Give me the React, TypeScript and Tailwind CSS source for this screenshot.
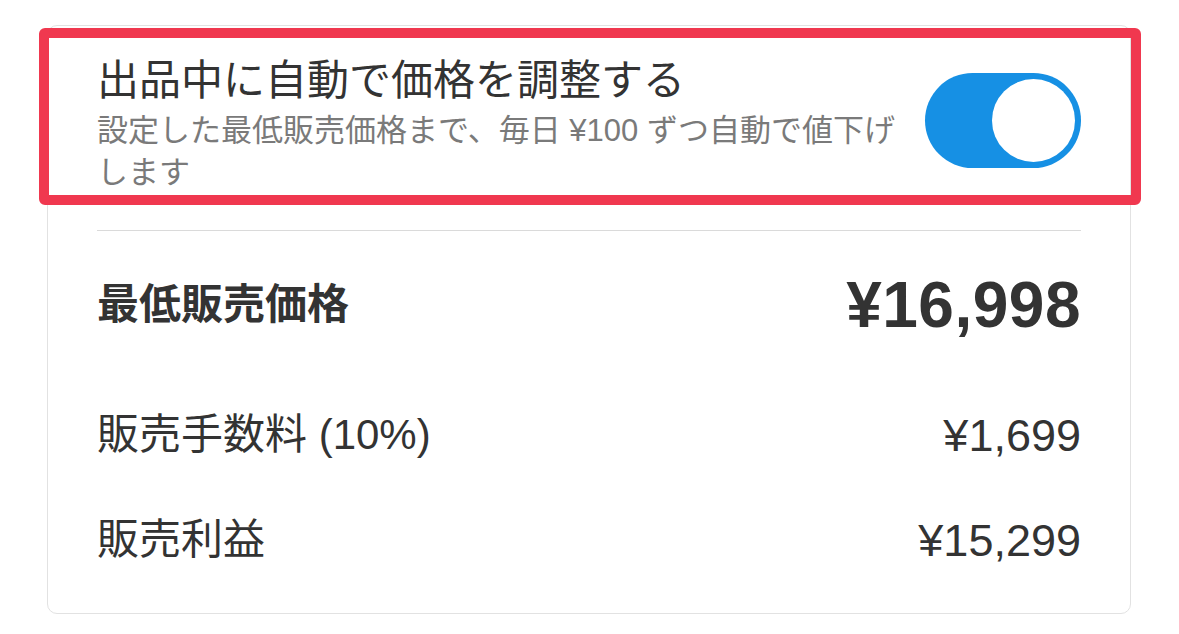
import { useState } from 'react';

const font = 'font-["Liberation_Sans","Noto_Sans_CJK_JP",sans-serif]';

interface ToggleProps {
  checked: boolean;
  onChange: (next: boolean) => void;
}

function Toggle({ checked, onChange }: ToggleProps) {
  return (
    <button
      type="button"
      role="switch"
      aria-checked={checked}
      onClick={() => onChange(!checked)}
      className={`mt-[18px] flex h-[95px] w-[156px] shrink-0 items-center rounded-full p-[6px] ${
        checked ? 'justify-end bg-[#1690e4]' : 'justify-start bg-[#e5e5ea]'
      }`}
    >
      <span className="h-[83px] w-[83px] rounded-full bg-white" />
    </button>
  );
}

interface RowProps {
  label: string;
  value: string;
  strong?: boolean;
  height: string;
}

function PriceRow({ label, value, strong, height }: RowProps) {
  return (
    <div className={`flex items-center justify-between ${height}`}>
      <div className={`text-[42px] leading-none ${strong ? 'font-bold' : ''}`}>{label}</div>
      <div
        className={
          strong
            ? 'text-[64px] leading-none font-bold tracking-[0.5px]'
            : 'text-[45px] leading-none'
        }
      >
        {value}
      </div>
    </div>
  );
}

export default function App() {
  const [autoPrice, setAutoPrice] = useState(true);

  return (
    <div className={`min-h-screen bg-white pt-[25px] pl-[47px] text-[#333] ${font}`}>
      <div className="relative w-[1084px] rounded-[10px] border border-[#e2e2e2] px-[49px] pt-[29px] pb-[24px]">
        <div className="flex items-start gap-[20px]">
          <div className="flex-1">
            <div className="text-[42px] leading-[52px]">出品中に自動で価格を調整する</div>
            <div className="mt-[3px] text-[31px] leading-[42px] text-[#7a7a7a]">
              設定した最低販売価格まで、毎日 ¥100 ずつ自動で値下げします
            </div>
          </div>
          <Toggle checked={autoPrice} onChange={setAutoPrice} />
        </div>

        {/* highlight frame around the auto-pricing setting */}
        <div className="pointer-events-none absolute top-[2px] left-[-9px] h-[177px] w-[1102px] rounded-[6px] border-[10px] border-[#f0384f]" />

        <div className="mt-[36px] h-px bg-[#dadada]" />

        <PriceRow label="最低販売価格" value="¥16,998" strong height="h-[148px]" />
        <PriceRow label="販売手数料 (10%)" value="¥1,699" height="h-[112px]" />
        <PriceRow label="販売利益" value="¥15,299" height="h-[98px]" />
      </div>
    </div>
  );
}
